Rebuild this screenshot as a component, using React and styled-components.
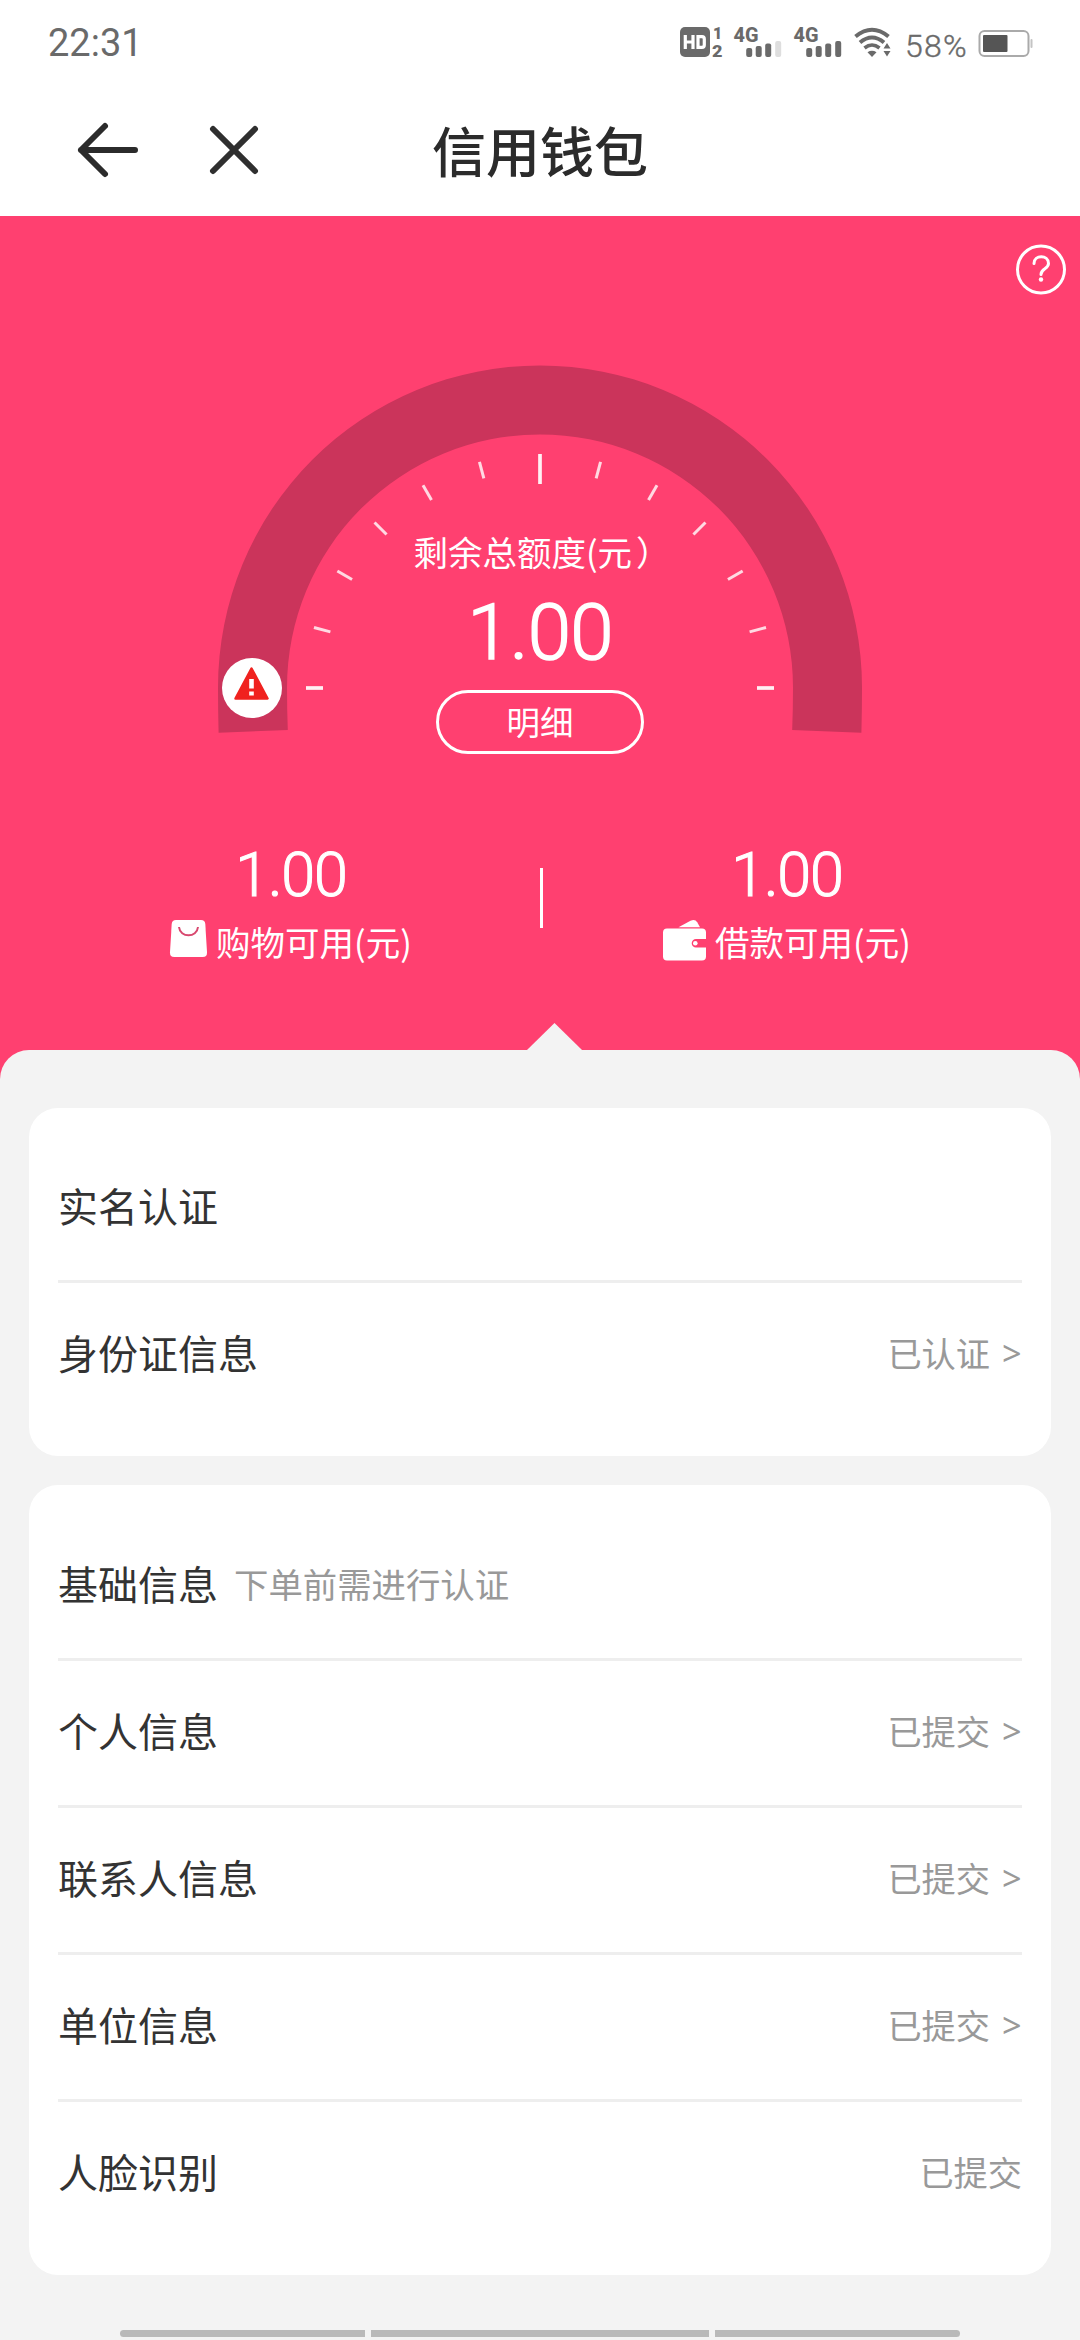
import React from 'react'
import styled, { createGlobalStyle } from 'styled-components'

const GlobalStyle = createGlobalStyle`
  * {
    box-sizing: border-box;
  }
  body {
    margin: 0;
    background: #f3f3f3;
    font-family: 'Noto Sans CJK SC', sans-serif;
    color: #333;
  }
  svg {
    display: block;
    flex: none;
    overflow: visible;
  }
`

const Page = styled.div`
  width: 1080px;
  height: 2340px;
  display: flex;
  flex-direction: column;
  overflow: hidden;
  background: #f3f3f3;
`

const StatusBar = styled.div`
  height: 84px;
  padding: 27px 47px 0 48px;
  display: flex;
  align-items: flex-start;
  justify-content: space-between;
  background: #fff;
  color: #6a6a6a;
`

const Clock = styled.span`
  font: 400 38px/32px Roboto, sans-serif;
`

const StatusIcons = styled.div`
  display: flex;
  align-items: flex-start;
  gap: 11px;
`

const BatteryText = styled.span`
  width: 62px;
  padding-top: 3px;
  font: 300 32px/32px Roboto, sans-serif;
  letter-spacing: 1.2px;
  -webkit-text-stroke: 0.4px #6a6a6a;
`

const NavBar = styled.div`
  height: 132px;
  padding: 0 78px;
  display: grid;
  grid-template-columns: 1fr auto 1fr;
  align-items: center;
  background: #fff;
`

const NavButtons = styled.div`
  display: flex;
  gap: 72px;
`

const Title = styled.h1`
  margin: 0 0 1px;
  font-size: 54px;
  font-weight: 500;
  line-height: 60px;
  color: #2b2b2b;
`

const Hero = styled.section`
  height: 834px;
  position: relative;
  display: flex;
  flex-direction: column;
  align-items: center;
  background: #ff4070;
  color: #fff;
`

const HelpButton = styled.div`
  position: absolute;
  top: 28px;
  right: 13px;
`

const GaugeBox = styled.div`
  position: relative;
  width: 648px;
  height: 376px;
  margin-top: 148px;
`

const GaugeContent = styled.div`
  position: absolute;
  inset: 0;
  padding-top: 167px;
  display: flex;
  flex-direction: column;
  align-items: center;
`

const GaugeLabel = styled.div`
  font-size: 34.5px;
  line-height: 40px;
  white-space: nowrap;
`

const WideParen = styled.span`
  margin: 0 -4px 0 4px;
`

const Amount = styled.div`
  flex: none;
  margin-top: ${p => (p.$large ? 22 : 0)}px;
  font-family: Roboto, sans-serif;
  font-weight: 300;
  font-size: ${p => (p.$large ? 78 : 61)}px;
  line-height: ${p => (p.$large ? 80 : 62)}px;
  letter-spacing: ${p => (p.$large ? -0.8 : -1.2)}px;
  -webkit-text-stroke: ${p => (p.$large ? 1.5 : 1.1)}px #fff;
`

const DetailButton = styled.button`
  flex: none;
  width: 208px;
  height: 64px;
  margin: 17px 0 0;
  padding: 0 0 2px;
  border: 3px solid #fff;
  border-radius: 32px;
  background: none;
  color: #fff;
  font-family: inherit;
  font-size: 33.5px;
  line-height: 40px;
`

const Balances = styled.div`
  width: 100%;
  padding: 0 45px 0 43px;
  display: flex;
  margin-top: 104px;
`

const Balance = styled.div`
  flex: 1;
  display: flex;
  flex-direction: column;
  align-items: center;
`

const BalanceLabel = styled.div`
  display: flex;
  align-items: flex-start;
  gap: 9px;
  margin-top: 14px;
  font-size: 34.5px;
  line-height: 42px;
`

const Divider = styled.div`
  width: 3px;
  height: 60px;
  margin: 24px -4px 0 1px;
  background: #fff;
`

const Notch = styled.div`
  position: absolute;
  left: 527px;
  bottom: 0;
  width: 55px;
  height: 27px;
  background: #f3f3f3;
  clip-path: polygon(50% 0, 100% 100%, 0 100%);
`

const HeroBottom = styled.div`
  background: #ff4070;
`

const Sheet = styled.main`
  padding: 58px 29px 0;
  display: flex;
  flex-direction: column;
  gap: 29px;
  border-radius: 29px 29px 0 0;
  background: #f3f3f3;
`

const Card = styled.section`
  padding: ${p => p.$top}px 29px 29px;
  border-radius: 29px;
  background: #fff;
`

const Row = styled.div`
  height: ${p => (p.$first ? 144 : 147)}px;
  border-top: ${p => (p.$first ? 0 : 3)}px solid #eee;
  padding-bottom: 6px;
  display: flex;
  align-items: center;
`

const RowTitle = styled.span`
  font-size: 40px;
  line-height: 60px;
  color: #333;
`

const Hint = styled.span`
  margin-left: 16px;
  font-size: 34.4px;
  color: #999;
`

const Status = styled.span`
  margin-left: auto;
  display: flex;
  align-items: center;
  gap: 12px;
  font-size: 34.2px;
  color: #999;
`

const Chevron = styled.span`
  width: 20px;
  font-family: 'Noto Sans', sans-serif;
`

const HomeBar = styled.div`
  margin-top: auto;
  padding: 0 120px 3px;
  display: flex;
  gap: 6px;
`

const HomeSegment = styled.div`
  flex: ${p => p.$grow};
  height: 7px;
  background: #b9b9b9;
  border-radius: ${p => p.$radius || '0'};
`

const HdIcon = () => (
  <svg width='43' height='30' viewBox='0 0 43 30' fill='#6a6a6a'>
    <rect width='30' height='30' rx='5' />
    <g fill='none' stroke='#fff' strokeWidth='3.2'>
      <path d='M5.3 8v14M13 8v14M5.3 15H13' />
      <path d='M18 9.6h4q2.3 0 2.3 2.3v6.2q0 2.3-2.3 2.3h-4z' />
    </g>
    <g fontFamily='Roboto, sans-serif' fontWeight='900' fontSize='16'>
      <text x='33' y='12'>1</text>
      <text x='32' y='29.5' textLength='10.5' lengthAdjust='spacingAndGlyphs'>2</text>
    </g>
  </svg>
)

const BARS = [
  { x: 13, y: 21 },
  { x: 22.5, y: 19 },
  { x: 32, y: 16.5 },
  { x: 42, y: 14 }
]

const SignalIcon = ({ level }) => (
  <svg width='49' height='31' viewBox='0 0 49 31' fill='#6a6a6a'>
    <text
      x='-0.5'
      y='14.5'
      textLength='25'
      lengthAdjust='spacingAndGlyphs'
      fontFamily='Roboto, sans-serif'
      fontWeight='800'
      fontSize='19.5'
    >
      4G
    </text>
    {BARS.map((bar, i) => (
      <rect
        key={bar.x}
        x={bar.x - 0.8}
        y={bar.y}
        width='6'
        height={30 - bar.y}
        rx='2'
        fill={i < level ? '#6a6a6a' : '#dedede'}
      />
    ))}
  </svg>
)

const WifiIcon = () => (
  <svg width='40' height='30' viewBox='0 0 40 30'>
    <g fill='none' stroke='#6a6a6a' strokeWidth='4'>
      <path d='M1.5 9.5Q18 -4 34.5 9.5' />
      <path d='M6 15.5Q18 5.5 30 15.5' />
      <path d='M10.5 21Q18 15 25.5 21' strokeWidth='3.6' />
    </g>
    <path d='M13.5 25.2Q18 22.5 22.5 25.2L18 30z' fill='#6a6a6a' />
    <path d='M29.5 21.5L33 16l3.5 5.5zM29.5 24h7L33 29.5z' fill='#6a6a6a' />
  </svg>
)

const BatteryIcon = () => (
  <svg width='55' height='32' viewBox='0 0 55 32'>
    <rect x='1.5' y='4' width='49' height='25' rx='5' fill='none' stroke='#aaa' strokeWidth='2' />
    <rect x='5' y='8' width='24.5' height='17' rx='1' fill='#555' />
    <rect x='52.5' y='12' width='2' height='9' rx='1' fill='#c4c4c4' />
  </svg>
)

const BackIcon = () => (
  <svg width='60' height='56' viewBox='0 0 60 56' fill='none' stroke='#2b2b2b' strokeWidth='6' strokeLinecap='round' strokeLinejoin='round'>
    <path d='M27 4L3 28l24 24M3 28h54' />
  </svg>
)

const CloseIcon = () => (
  <svg width='48' height='56' viewBox='0 0 48 56' fill='none' stroke='#2f2f2f' strokeWidth='6' strokeLinecap='round'>
    <path d='M3 7l42 42M45 7L3 49' />
  </svg>
)

const HelpIcon = () => (
  <svg width='52' height='52' viewBox='0 0 52 52' fill='none' stroke='#fff' strokeWidth='3' strokeLinecap='round'>
    <circle cx='26' cy='25.5' r='23.5' />
    <path d='M19 19.5C19 10.5 33.5 10.5 33.5 19.5C33.5 25 26 24.5 26 30.5' />
    <circle cx='26' cy='35.5' r='2.2' fill='#fff' stroke='none' />
  </svg>
)

const BagIcon = () => (
  <svg width='37' height='37' viewBox='0 0 37 37'>
    <path d='M6 0h25q4 0 4.3 4L37 32.5q.2 4.5-4.3 4.5H4.3Q-.2 37 0 32.5L1.7 4Q2 0 6 0z' fill='#fff' />
    <path d='M9 7c1 11 18 11 19 0' fill='none' stroke='#d8486f' strokeWidth='2' />
  </svg>
)

const WalletIcon = () => (
  <svg width='43' height='41' viewBox='0 0 43 41' fill='#fff'>
    <path d='M15.5 7.2L27.5 .8q4.5-2.2 6.7 1.4L37 7.2z' />
    <path d='M4 8.5h35q4 0 4 4V19H33a4.3 4.3 0 0 0 0 8.6h10V36.5q0 4-4 4H4q-4 0-4-4v-24q0-4 4-4z' />
    <circle cx='32.3' cy='23.3' r='2.3' />
  </svg>
)

/* 13 ticks, one every 15deg, the middle one is longer */
const TICKS = Array.from({ length: 13 }, (_, i) => i)

const Gauge = () => (
  <svg width='648' height='376' viewBox='0 0 648 376'>
    <path
      d='M2.6 368.7Q2 345 2 323.5A322 322 0 0 1 646 323.5Q646 345 645.4 368.7L576.2 366Q577 345 577 323.5A253 253 0 0 0 71 323.5Q71 345 71.8 366z'
      fill='#cb345b'
    />
    {TICKS.map(i => {
      const main = i % 6 === 0
      return (
        <line
          key={i}
          x1={i === 6 ? 120 : 107}
          x2='90'
          y1='324'
          y2='324'
          stroke='#fff'
          strokeOpacity={main ? 0.92 : 0.8}
          strokeWidth={main ? 3.7 : 3}
          transform={`rotate(${i * 15} 324 324)`}
        />
      )
    })}
    <circle cx='36' cy='324' r='30' fill='#fff' />
    <path d='M35.5 304.5L51.5 334.5H19.5z' fill='#f0221f' stroke='#f0221f' strokeWidth='2.5' strokeLinejoin='round' />
    <path d='M33.2 315h4.6v9.5h-4.6zM33.2 327.5h4.6v4h-4.6z' fill='#fff' />
  </svg>
)

const cards = [
  {
    top: 28,
    rows: [
      { title: '实名认证' },
      { title: '身份证信息', status: '已认证', link: true }
    ]
  },
  {
    top: 29,
    rows: [
      { title: '基础信息', hint: '下单前需进行认证' },
      { title: '个人信息', status: '已提交', link: true },
      { title: '联系人信息', status: '已提交', link: true },
      { title: '单位信息', status: '已提交', link: true },
      { title: '人脸识别', status: '已提交' }
    ]
  }
]

function App () {
  return (
    <Page>
      <GlobalStyle />
      <StatusBar>
        <Clock>22:31</Clock>
        <StatusIcons>
          <HdIcon />
          <SignalIcon level={3} />
          <SignalIcon level={4} />
          <WifiIcon />
          <BatteryText>58%</BatteryText>
          <BatteryIcon />
        </StatusIcons>
      </StatusBar>
      <NavBar>
        <NavButtons>
          <BackIcon />
          <CloseIcon />
        </NavButtons>
        <Title>信用钱包</Title>
      </NavBar>

      <Hero>
        <HelpButton>
          <HelpIcon />
        </HelpButton>
        <GaugeBox>
          <Gauge />
          <GaugeContent>
            <GaugeLabel>
              剩余总额度(元<WideParen>）</WideParen>
            </GaugeLabel>
            <Amount $large>1.00</Amount>
            <DetailButton>明细</DetailButton>
          </GaugeContent>
        </GaugeBox>
        <Balances>
          <Balance>
            <Amount>1.00</Amount>
            <BalanceLabel>
              <BagIcon />
              购物可用(元)
            </BalanceLabel>
          </Balance>
          <Divider />
          <Balance>
            <Amount>1.00</Amount>
            <BalanceLabel>
              <WalletIcon />
              借款可用(元)
            </BalanceLabel>
          </Balance>
        </Balances>
        <Notch />
      </Hero>

      <HeroBottom>
        <Sheet>
          {cards.map(card => (
            <Card key={card.top} $top={card.top}>
              {card.rows.map((row, i) => (
                <Row key={row.title} $first={i === 0}>
                  <RowTitle>{row.title}</RowTitle>
                  {row.hint && <Hint>{row.hint}</Hint>}
                  {row.status && (
                    <Status>
                      {row.status}
                      {row.link && <Chevron>&gt;</Chevron>}
                    </Status>
                  )}
                </Row>
              ))}
            </Card>
          ))}
        </Sheet>
      </HeroBottom>

      <HomeBar>
        <HomeSegment $grow={245} $radius='4px 0 0 4px' />
        <HomeSegment $grow={338} />
        <HomeSegment $grow={245} $radius='0 4px 4px 0' />
      </HomeBar>
    </Page>
  )
}

export default App
